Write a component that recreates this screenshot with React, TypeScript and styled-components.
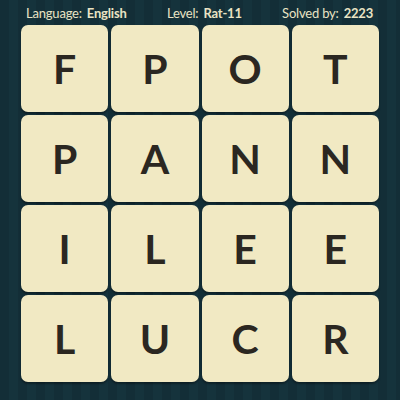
import React from 'react'
import styled, { createGlobalStyle } from 'styled-components'

const GlobalStyle = createGlobalStyle`
    html, body {
        margin: 0;
        padding: 0;
    }
    body {
        width: 400px;
        height: 400px;
        overflow: hidden;
        background: #13303a;
    }
`

const Page = styled.div`
    width: 400px;
    height: 400px;
    box-sizing: border-box;
    display: flex;
    flex-direction: column;
    background: repeating-linear-gradient(
        90deg,
        #132e37 0px,
        #132e37 9px,
        #15333c 9px,
        #15333c 18px
    );
    font-family: Lato, "Liberation Sans", sans-serif;
`

const Header = styled.div`
    height: 25px;
    display: flex;
    align-items: center;
    justify-content: space-between;
    padding: 0 27px 0 26px;
    color: #e9e3c4;
    font-size: 13px;
    letter-spacing: -0.2px;
`

const Stat = styled.div`
    display: flex;
    gap: 5px;
`

const Value = styled.span`
    font-weight: 700;
`

const Board = styled.div`
    margin-left: 21px;
    width: 358px;
    display: grid;
    grid-template-columns: repeat(4, 1fr);
    grid-auto-rows: 87px;
    gap: 3px;
`

const Tile = styled.div`
    background: #f1e9c3;
    border-radius: 7px;
    box-shadow: 0 2px 2px rgba(0, 0, 0, 0.35);
    display: flex;
    align-items: center;
    justify-content: center;
    color: #2b2721;
    font-size: 41px;
    font-weight: 700;
    line-height: 1;
`

const letters = 'FPOTPANNILEELUCR'.split('')

export default function App() {
    return (
        <>
            <GlobalStyle />
            <Page>
                <Header>
                    <Stat>Language: <Value>English</Value></Stat>
                    <Stat>Level: <Value>Rat-11</Value></Stat>
                    <Stat>Solved by: <Value>2223</Value></Stat>
                </Header>
                <Board>
                    {letters.map((l, i) => (
                        <Tile key={i}>{l}</Tile>
                    ))}
                </Board>
            </Page>
        </>
    )
}
